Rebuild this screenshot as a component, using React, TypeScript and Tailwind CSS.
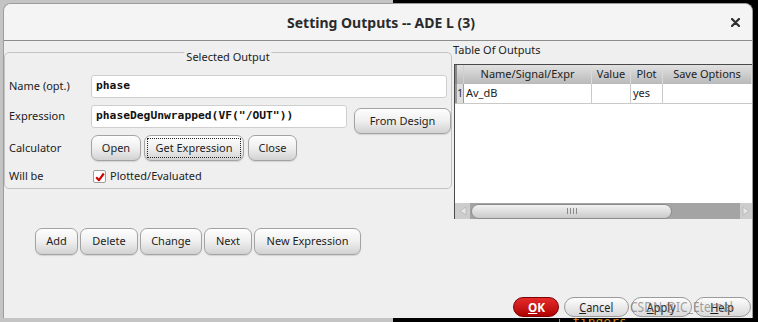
import React from 'react';

const ui = "font-['Noto_Sans',sans-serif]";
const mono = "font-['DejaVu_Sans_Mono',monospace]";

function Btn({ children, className = '' }: { children: React.ReactNode; className?: string }) {
  return (
    <div
      className={`flex shrink-0 items-center justify-center rounded-[7px] border border-[#a3a3a3] bg-linear-to-b from-[#fefefe] via-[#efefef] to-[#d2d2d2] text-[11px] text-[#1e1e1e] shadow-[0_1px_1px_rgba(0,0,0,0.12)] ${className}`}
    >
      {children}
    </div>
  );
}

function Pill({ children, className = '' }: { children: React.ReactNode; className?: string }) {
  return (
    <div
      className={`flex h-[20px] shrink-0 items-center justify-center rounded-full border border-[#9a9a9a] bg-linear-to-b from-[#fdfdfd] to-[#d9d9d9] text-[#1e1e1e] ${className}`}
    >
      <span className="inline-block scale-x-[0.84] text-[13px] leading-none">{children}</span>
    </div>
  );
}

function Field({ value, className = '' }: { value: string; className?: string }) {
  return (
    <div
      className={`flex h-[23px] shrink-0 items-center rounded-[3px] border border-[#cfcfcf] bg-white pl-[4px] text-[11.3px] font-bold text-[#111] ${mono} ${className}`}
    >
      {value}
    </div>
  );
}

export default function App() {
  return (
    <div className={`relative flex h-[322px] w-[758px] overflow-hidden ${ui}`}>
      {/* whatever sits behind the dialog */}
      <div className="w-[393px] bg-[#c4c4c4]" />
      <div className="flex-1 bg-black" />
      <span className={`absolute left-[572px] top-[315px] text-[13px] leading-none text-[#d98a1c] ${mono}`}>fingers</span>
      <div className="absolute left-[559px] top-[319px] h-[3px] w-px bg-[#2fbf5a]" />

      {/* dialog */}
      <div className="absolute left-[3px] top-[3px] flex h-[315px] w-[750px] flex-col overflow-hidden rounded-t-[8px] border-x border-t border-[#9c9c9c] bg-[#efefef]">
        {/* title bar */}
        <div className="relative flex h-[37px] shrink-0 items-center justify-center border-b border-[#8d8d8d] bg-[#f4f4f4]">
          <span className="pl-[6px] text-[14px] font-bold text-[#2b2b2b]">Setting Outputs -- ADE L (3)</span>
          <svg className="absolute right-[12px] top-[14px]" width="9" height="9" viewBox="0 0 9 9">
            <path d="M1 1 L8 8 M8 1 L1 8" stroke="#2e2e2e" strokeWidth="2.2" strokeLinecap="round" />
          </svg>
        </div>

        {/* body */}
        <div className="flex flex-1 flex-col">
          <div className="flex">
            {/* Selected Output group */}
            <div className="w-[448px] shrink-0 pt-[11px]">
              <div className="relative h-[137px] rounded-[5px] border border-[#c3c3c3] pl-[4px] pt-[22px]">
                <span className="absolute -top-[4px] left-1/2 -translate-x-1/2 bg-[#efefef] px-[2px] text-[11px] leading-[16px] text-[#222]">
                  Selected Output
                </span>

                <div className="flex h-[23px] items-center">
                  <span className="w-[82px] shrink-0 text-[11px] text-[#222]">Name (opt.)</span>
                  <Field value="phase" className="w-[356px]" />
                </div>

                <div className="mt-[7px] flex h-[29px] items-start">
                  <span className="flex h-[23px] w-[82px] shrink-0 items-center text-[11px] text-[#222]">Expression</span>
                  <Field value={'phaseDegUnwrapped(VF("/OUT"))'} className="w-[256px]" />
                  <Btn className="ml-[7px] mt-[3px] h-[26px] w-[97px]">From Design</Btn>
                </div>

                <div className="mt-px flex h-[26px] items-center">
                  <span className="w-[82px] shrink-0 text-[11px] text-[#222]">Calculator</span>
                  <Btn className="h-[26px] w-[50px]">Open</Btn>
                  <Btn className="ml-[3px] h-[26px] w-[100px] p-[2px]">
                    <div className="flex h-full w-full items-center justify-center border border-dotted border-[#222]">
                      Get Expression
                    </div>
                  </Btn>
                  <Btn className="ml-[4px] h-[26px] w-[49px]">Close</Btn>
                </div>

                <div className="mt-[9px] flex h-[13px] items-center">
                  <span className="w-[84px] shrink-0 text-[11px] text-[#222]">Will be</span>
                  <div className="flex h-[13px] w-[13px] items-center justify-center rounded-[2px] border border-[#9d9d9d] bg-white">
                    <svg width="10" height="10" viewBox="0 0 10 10">
                      <path d="M1.2 5.2 L4 8.2 L8.8 1.5" fill="none" stroke="#d40000" strokeWidth="2.2" strokeLinejoin="round" />
                    </svg>
                  </div>
                  <span className="ml-[4px] text-[11px] text-[#222]">Plotted/Evaluated</span>
                </div>
              </div>
            </div>

            {/* Table Of Outputs */}
            <div className="flex min-w-0 flex-1 flex-col pl-px">
              <span className="mt-px h-[16px] text-[11px] leading-[16px] text-[#222]">Table Of Outputs</span>
              <div className="ml-px mt-[6px] flex h-[155px] flex-col border-l border-t border-[#4a4a4a] bg-white">
                <div className="flex h-[19px] shrink-0 bg-linear-to-b from-[#e2e2e2] to-[#b9b9b9] text-[11px] text-[#222]">
                  <div className="w-[9px] border-l-2 border-r border-[#8a8a8a] border-r-[#d0d0d0]" />
                  <div className="flex w-[128px] items-center justify-center border-r border-[#dadada]">Name/Signal/Expr</div>
                  <div className="flex w-[39px] items-center justify-center border-r border-[#dadada]">Value</div>
                  <div className="flex w-[32px] items-center justify-center border-r border-[#dadada]">Plot</div>
                  <div className="flex flex-1 items-center justify-center border-r border-[#dadada]">Save Options</div>
                </div>
                <div className="flex h-[20px] shrink-0 border-b border-[#c9c9c9] text-[11px] text-[#222]">
                  <div className="flex w-[9px] items-center justify-center border-l-2 border-r border-[#9a9a9a] bg-[#dedede] text-[10px]">1</div>
                  <div className="flex w-[128px] items-center border-r border-[#c9c9c9] pl-[2px]">Av_dB</div>
                  <div className="w-[39px] border-r border-[#c9c9c9]" />
                  <div className="flex w-[32px] items-center border-r border-[#c9c9c9] pl-[2px]">yes</div>
                  <div className="flex-1" />
                </div>
                <div className="flex-1" />
                <div className="flex h-[16px] shrink-0 items-center bg-[#a4a4a4]">
                  <div className="flex h-full w-[15px] items-center justify-center bg-[#cdcdcd]">
                    <svg width="8" height="10" viewBox="0 0 8 10">
                      <path d="M7 1 L1 5 L7 9 Z" fill="#e6e6e6" stroke="#b5b5b5" strokeWidth="0.8" />
                    </svg>
                  </div>
                  <div className="ml-px flex h-[15px] w-[201px] items-center justify-center rounded-full border border-[#8c8c8c] bg-linear-to-b from-[#f2f2f2] to-[#cacaca]">
                    <div className="flex gap-[2px]">
                      <div className="h-[6px] w-px bg-[#8a8a8a]" />
                      <div className="h-[6px] w-px bg-[#8a8a8a]" />
                      <div className="h-[6px] w-px bg-[#8a8a8a]" />
                      <div className="h-[6px] w-px bg-[#8a8a8a]" />
                    </div>
                  </div>
                  <div className="flex-1" />
                  <div className="flex h-full w-[12px] items-center justify-center bg-[#cdcdcd]">
                    <svg width="8" height="10" viewBox="0 0 8 10">
                      <path d="M1 1 L7 5 L1 9 Z" fill="#e6e6e6" stroke="#b5b5b5" strokeWidth="0.8" />
                    </svg>
                  </div>
                </div>
              </div>
            </div>
          </div>

          {/* action buttons */}
          <div className="mt-[9px] flex h-[27px] gap-[2px] pl-[31px]">
            <Btn className="h-[27px] w-[43px]">Add</Btn>
            <Btn className="h-[27px] w-[58px]">Delete</Btn>
            <Btn className="h-[27px] w-[62px]">Change</Btn>
            <Btn className="h-[27px] w-[48px]">Next</Btn>
            <Btn className="h-[27px] w-[107px]">New Expression</Btn>
          </div>

          <div className="flex-1" />

          {/* dialog buttons */}
          <div className="mb-px flex justify-end pr-px">
            <div className="flex h-[20px] w-[46px] items-center justify-center rounded-full border border-[#7c0000] bg-linear-to-b from-[#e52a2a] to-[#b00000]">
              <span className="inline-block scale-x-[0.9] text-[13px] font-bold leading-none text-white">
                <span className="underline">O</span>K
              </span>
            </div>
            <Pill className="ml-[5px] w-[65px]">
              <span className="underline">C</span>ancel
            </Pill>
            <Pill className="ml-[2px] w-[61px]">
              <span className="underline">A</span>pply
            </Pill>
            <Pill className="ml-[2px] w-[57px]">
              <span className="underline">H</span>elp
            </Pill>
          </div>
        </div>
      </div>

      {/* watermark */}
      <span className="pointer-events-none absolute left-[630px] top-[296px] origin-left scale-x-[0.8] whitespace-nowrap text-[15px] leading-[20px] text-[#7a7a7a]/70">
        CSDN @IC_Eternal
      </span>
    </div>
  );
}
